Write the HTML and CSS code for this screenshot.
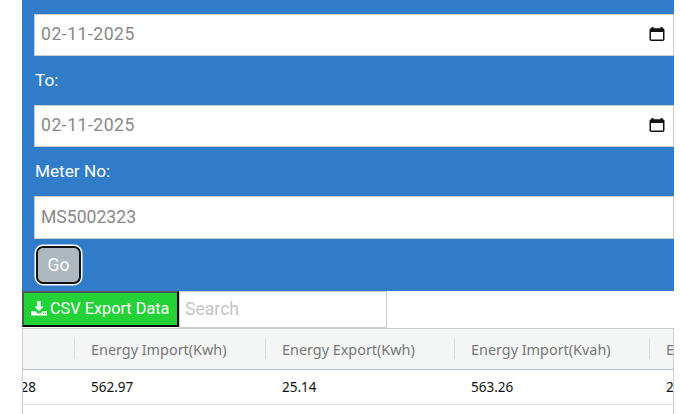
FILE: index.html
```html
<!DOCTYPE html>
<html lang="en">
<head>
<meta charset="utf-8">
<title>Meter data</title>
<link rel="stylesheet" href="styles.css">
</head>
<body>
<main class="page">
  <form class="filter">
    <div class="field date-field">
      <input class="field-input date-input" type="text" value="02-11-2025" aria-label="From">
      <svg class="cal" viewBox="0 0 16 16" width="16" height="16"><path d="M2.5 1v1.2h-.3A1.7 1.7 0 0 0 .5 3.900v9.400C.5 14.300 1.300 15 2.200 15h11.600c.9 0 1.700-.7 1.700-1.700V3.900c0-.9-.8-1.700-1.700-1.700h-.3V1h-2v1.200h-7V1zM2 6h12v7.200c0 .2-.2.3-.3.3H2.300c-.1 0-.3-.1-.3-.3z" fill="#111"/></svg>
    </div>
    <label class="label">To:</label>
    <div class="field date-field">
      <input class="field-input date-input" type="text" value="02-11-2025" aria-label="To">
      <svg class="cal" viewBox="0 0 16 16" width="16" height="16"><path d="M2.5 1v1.2h-.3A1.7 1.7 0 0 0 .5 3.900v9.400C.5 14.300 1.300 15 2.200 15h11.600c.9 0 1.700-.7 1.700-1.700V3.900c0-.9-.8-1.700-1.700-1.700h-.3V1h-2v1.200h-7V1zM2 6h12v7.200c0 .2-.2.3-.3.3H2.300c-.1 0-.3-.1-.3-.3z" fill="#111"/></svg>
    </div>
    <label class="label">Meter No:</label>
    <div class="field meter-field">
      <input class="field-input" type="text" placeholder="MS5002323" aria-label="Meter No">
    </div>
    <button class="go" type="button">Go</button>
  </form>
  <div class="tools">
    <button class="export" type="button">
      <svg viewBox="0 0 16 16" width="16" height="16"><path fill-rule="evenodd" d="M6.300 1h3.400v5.500h2.900L8 11.200 3.400 6.500h2.900zM0 11.300h4.400L6.500 13.400h3l2.100-2.100H16V15.500H0zM12 13v1h1v-1zM14 13v1h1v-1z" fill="#fff"/></svg>
      <span>CSV Export Data</span>
    </button>
    <input class="search" type="text" placeholder="Search" aria-label="Search">
  </div>
  <div class="table">
    <div class="row head">
      <div class="cell c0"></div>
      <div class="cell c1">Energy Import(Kwh)</div>
      <div class="cell c2">Energy Export(Kwh)</div>
      <div class="cell c3">Energy Import(Kvah)</div>
      <div class="cell c4">Energy Export(Kvah)</div>
    </div>
    <div class="row body">
      <div class="cell c0"><span>28</span></div>
      <div class="cell c1">562.97</div>
      <div class="cell c2">25.14</div>
      <div class="cell c3">563.26</div>
      <div class="cell c4">25.14</div>
    </div>
  </div>
</main>
</body>
</html>
```
FILE: styles.css
```css
* { box-sizing: border-box; }
html, body { margin: 0; height: 414px; overflow: hidden; background: #fff; }
.page { margin-left: 22px; width: 652px; font-family: Roboto, sans-serif; }
.filter { background: #307cc9; height: 291px; padding: 14px 0 0 12px; display: flex; flex-direction: column; align-items: stretch; }
.field { height: 42px; background: #fff; border: 1px solid #ccc; display: flex; align-items: center; padding: 0 8px 2px 6px; }
.meter-field { height: 43px; }
.field-input { flex: 1; min-width: 0; border: 0; padding: 0; outline: 0; background: transparent; font: 17.6px Roboto, sans-serif; color: #888; }
.date-input { letter-spacing: .5px; }
.field-input::placeholder { color: #888; opacity: 1; }
.cal { flex: none; }
.label { color: #fff; font-size: 17.2px; height: 49px; line-height: 49px; padding-left: 1px; }
.go { align-self: flex-start; width: 45px; height: 38px; margin: 7px 0 0 2px; padding: 0; border: 2px solid #111; border-radius: 7px; background: #adb8c0; color: #fff; font: 17.6px Roboto, sans-serif; box-shadow: 0 0 0 1.500px #fff; }
.tools { display: flex; height: 37px; }
.export { width: 157px; height: 36px; padding: 0 0 2px 7px; display: flex; align-items: center; gap: 3px; background: #22d237; color: #fff; font: 16.3px Roboto, sans-serif; border: 2px solid; border-color: #555 #000 #000 #555; }
.search { width: 208px; height: 37px; padding: 0 5px 2px; border: 1px solid #ccc; font: 17.6px Roboto, sans-serif; outline: 0; }
.search::placeholder { color: #c4c4c4; opacity: 1; }
.table { border: 1px solid #ccc; border-bottom: 0; height: 86px; overflow: hidden; font-family: "Noto Sans", sans-serif; font-size: 14.4px; }
.row { display: flex; width: 800px; }
.head { height: 41px; background: #f4f6f6; color: #777; border-bottom: 1px solid #bbc0c6; }
.body { height: 35px; border-bottom: 1px solid #ddd; color: #111; font-size: 13.5px; }
.cell { flex: none; display: flex; align-items: center; padding-left: 16px; position: relative; white-space: nowrap; }
.head .cell:not(.c4)::after { content: ""; position: absolute; right: 0; top: 10px; height: 20px; width: 1px; background: #ddd; }
.c0 { width: 52px; padding: 0 39px 0 0; justify-content: flex-end; overflow: hidden; }
.c1 { width: 191px; }
.c2 { width: 189px; }
.c3 { width: 195px; }
.c4 { width: 190px; }
```
